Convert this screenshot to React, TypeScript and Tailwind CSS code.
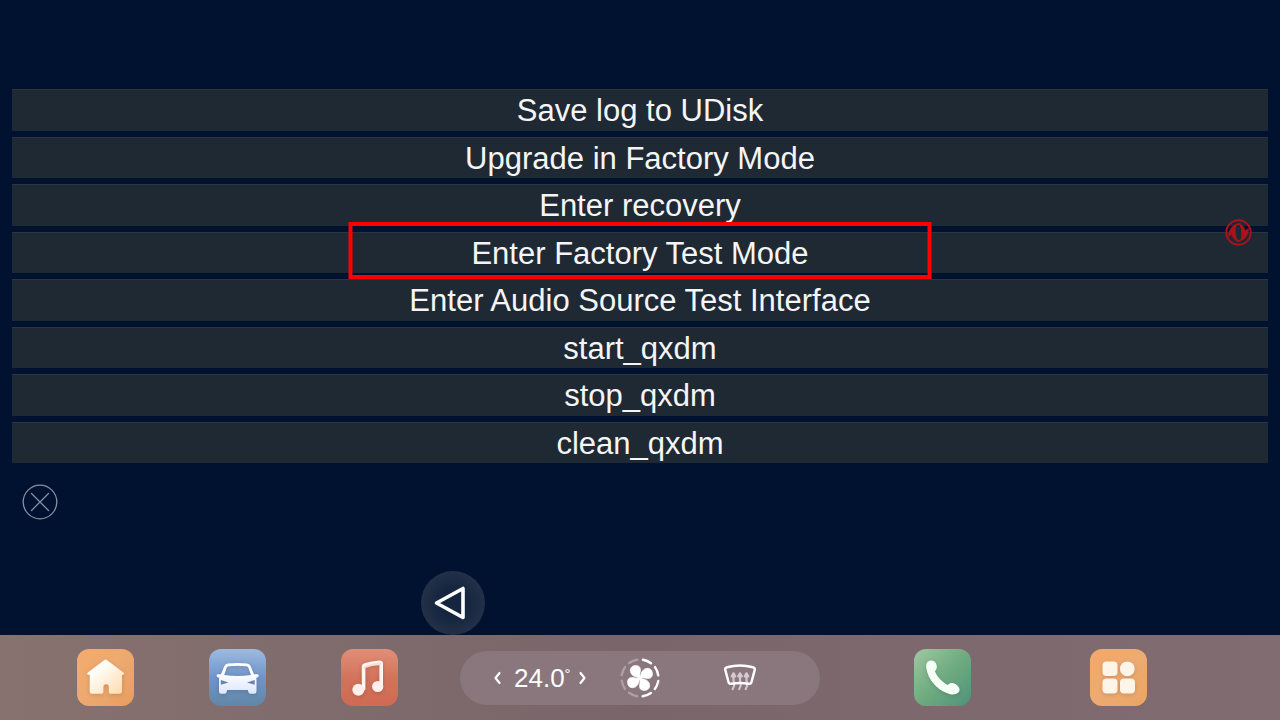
import React from 'react';

const menuItems = [
    { label: 'Save log to UDisk' },
    { label: 'Upgrade in Factory Mode' },
    { label: 'Enter recovery' },
    { label: 'Enter Factory Test Mode', marked: true },
    { label: 'Enter Audio Source Test Interface' },
    { label: 'start_qxdm' },
    { label: 'stop_qxdm' },
    { label: 'clean_qxdm' },
];

interface DockButtonProps {
    label: string;
    className: string;
    children: React.ReactNode;
}

const DockButton: React.FC<DockButtonProps> = ({ label, className, children }) => (
    <button aria-label={label} className={`size-[57px] shrink-0 rounded-xl ${className}`}>
        <svg viewBox="0 0 57 57" className="size-full drop-shadow-sm">
            {children}
        </svg>
    </button>
);

const HomeIcon = () => (
    <>
        <defs>
            <linearGradient id="home" x1="0" y1="0" x2="1" y2="1">
                <stop offset="0.3" stopColor="#fffdf8" />
                <stop offset="1" stopColor="#ffd9a8" />
            </linearGradient>
        </defs>
        <path
            d="M27 11.2q1.7-1.2 3.2 0L46.5 23.5q1.7 1.8-.5 2.2H45V42.5q0 2.3-2.3 2.3H33.5q-1.7 0-1.7-1.7V38a2.7 2.7 0 0 0-5.4 0v5.1q0 1.7-1.7 1.7H15q-2.3 0-2.3-2.3V25.7H11.3q-2.2-.4-.5-2.2z"
            fill="url(#home)"
        />
    </>
);

const CarIcon = () => (
    <>
        <defs>
            <linearGradient id="car" x1="0" y1="0" x2="0" y2="1">
                <stop offset="0.3" stopColor="#ffffff" />
                <stop offset="1" stopColor="#dce6ff" />
            </linearGradient>
        </defs>
        <path
            fillRule="evenodd"
            fill="url(#car)"
            d="M19 14.5Q28.5 13.3 38 14.5Q40.5 14.8 41.6 17L45 25.3H48.5Q50 25.5 49.7 27Q49.5 28.8 47.3 28.8Q47.5 30 47.5 32V42.5Q47.5 44.8 45 44.8H41.5Q39.5 44.8 39.3 42.8L38.8 41H18.2L17.7 42.8Q17.5 44.8 15.5 44.8H12Q10 44.8 10 42.5V32Q10 30 10.2 28.8Q8 28.8 7.6 27Q7.3 25.5 9 25.3H12L15.4 17Q16.5 14.8 19 14.5ZM19.5 17.3Q18.2 17.5 17.7 18.5L15.2 26Q28.5 28 42 26L39.3 18.5Q38.7 17.5 37.5 17.3Q28.5 16.4 19.5 17.3ZM11.8 31L19.5 33.5L11.8 35.8ZM45.7 31L38 33.5L45.7 35.8Z"
        />
    </>
);

const MusicIcon = () => (
    <>
        <path
            d="M22.6 40V17.6Q22.6 16.5 24 16Q31 13.6 38.5 13.2Q40.2 13.1 40.2 14.5V37"
            fill="none"
            stroke="#fff5f3"
            strokeWidth="3.6"
            strokeLinecap="round"
            strokeLinejoin="round"
        />
        <path d="M22.5 17.5Q31 14 40 13.5V16Q31 16.2 22.5 19.5Z" fill="#fbdcd6" />
        <circle cx="17.3" cy="40.7" r="6" fill="#fff0ed" />
        <circle cx="36.7" cy="37.5" r="5.6" fill="#fff0ed" />
    </>
);

const PhoneIcon = () => (
    <path
        d="M12.2 18.5Q11.6 12.5 16.5 11.6Q21 11.3 22.6 16Q23.5 20 20.9 22.5Q24.2 30.5 33.5 36Q36.5 32.5 41.5 35Q46.5 38.5 45.3 42Q43.5 46 37 45.4Q28 43.5 21 36.3Q13.5 28.5 12.2 18.5Z"
        fill="#f6fff6"
    />
);

const AppsIcon = () => (
    <g fill="#fff4e8">
        <rect x="12.5" y="12.5" width="15" height="14.5" rx="4" />
        <circle cx="37.3" cy="19.8" r="7.4" />
        <rect x="12.5" y="29.5" width="15" height="15" rx="4" />
        <rect x="30" y="29.5" width="15" height="15" rx="4" />
    </g>
);

const FanIcon = () => (
    <svg viewBox="0 0 40 40" className="size-10">
        {[0, 1, 2, 3, 4, 5, 6, 7].map((i) => (
            <path
                key={i}
                d="M22.9 1.7A18.5 18.5 0 0 1 31 5.2"
                transform={`rotate(${i * 45} 20 20)`}
                fill="none"
                stroke="#ffffff"
                strokeOpacity={i < 4 ? 1 : 0.3}
                strokeWidth="2.4"
                strokeLinecap="round"
            />
        ))}
        {[0, 90, 180, 270].map((angle) => (
            <path
                key={angle}
                d="M19.3 19.6C15 19.4 10.3 17 10.3 12.5C10.3 9 13 7.5 15.8 7.5C19.8 7.5 21 10.5 20.4 13.5C19.8 16 19.6 17 20.4 19Z"
                transform={`rotate(${angle} 20 20)`}
                fill="#ffffff"
                stroke="#ffffff"
                strokeWidth="0.6"
            />
        ))}
        <circle cx="20" cy="20" r="1.5" fill="#ffffff" />
    </svg>
);

const DefrostIcon = () => (
    <svg viewBox="0 0 34 28" className="h-7 w-[34px]" fill="none" strokeLinecap="round" strokeLinejoin="round">
        <g stroke="#d3cacf" strokeWidth="2.2">
            {[10.5, 17, 23.5].map((x) => (
                <g key={x} transform={`translate(${x} 0)`}>
                    <path d="M0 10V15.5Q0 18 .7 19.5Q1.2 22-.8 25" />
                    <path d="M-1.8 12.3L0 9.3L1.8 12.3Z" fill="#d3cacf" />
                </g>
            ))}
        </g>
        <path
            d="M4 3.2Q17-.4 30 3.2Q32.3 3.9 31.7 6L28.5 18Q28 20.1 25.5 19.8Q17 18.2 8.5 19.8Q6 20.1 5.5 18L2.3 6Q1.7 3.9 4 3.2Z"
            stroke="#ffffff"
            strokeWidth="2.5"
        />
    </svg>
);

const BrandLogo = () => (
    <svg viewBox="0 0 27 27" className="size-[27px]" fill="#b0101c">
        <circle cx="13.5" cy="13.5" r="12.2" fill="none" stroke="#b0101c" strokeWidth="1.9" />
        <path d="M16.5 4C10.5 6 9 15 13.5 22.5C9.5 21.5 7.3 19 6.8 15.5L3.2 18C3 10.5 8.5 3.5 16.5 4Z" />
        <path d="M10.5 23C16.5 21 18 12 13.500 4.500C17.500 5.500 19.700 8 20.200 11.500L23.800 9C24 16.500 18.500 23.500 10.500 23Z" />
        <ellipse cx="13.5" cy="13.5" rx="2.8" ry="7.6" transform="rotate(-8 13.5 13.5)" fill="#1f2a34" />
    </svg>
);

export default function App() {
    return (
        <div className="flex min-h-screen flex-col bg-[#00122f] font-['Liberation_Sans',sans-serif] text-white">
            <main className="relative flex-1 px-3 pt-[89px]">
                <ul className="grid min-h-[374px] auto-rows-fr gap-1.5">
                    {menuItems.map((item) => (
                        <li key={item.label} className="relative">
                            <button className="size-full border-t border-[#2b353e] bg-[#1f2934] pt-0.5 text-[31px] leading-9 text-[#f5f5f5]">
                                {item.label}
                            </button>
                            {item.marked && (
                                <span className="pointer-events-none absolute -top-2.5 -bottom-1.5 left-1/2 z-10 w-[583px] -translate-x-1/2 border-4 border-[#ff0000]" />
                            )}
                        </li>
                    ))}
                </ul>

                <button aria-label="Close" className="mt-[21px] ml-2.5 block size-9">
                    <svg viewBox="0 0 36 36" className="size-full" fill="none" stroke="#8490a0" strokeWidth="1.3" strokeLinecap="round">
                        <circle cx="18" cy="18" r="16.8" />
                        <path d="M9.5 9.5L26.5 26.5M26.5 9.5L9.5 26.5" />
                    </svg>
                </button>

                {/* floating controls */}
                <div className="absolute top-[219px] right-7">
                    <BrandLogo />
                </div>
                <button
                    aria-label="Back"
                    className="absolute bottom-0 left-[421px] size-16 rounded-full bg-radial from-[#16253f] from-30% to-[#2b384e]"
                >
                    <svg viewBox="0 0 64 64" className="size-full" fill="none" stroke="#ffffff" strokeWidth="3.6" strokeLinejoin="round">
                        <path d="M42 17.5V46.5L15.5 32Z" />
                    </svg>
                </button>
            </main>

            <footer className="grid grid-cols-[1fr_auto_1fr] items-center bg-linear-to-r from-[#87726f] via-[#79656a] to-[#806c71] py-3.5">
                <nav className="flex justify-between pr-[62px] pl-[77px]">
                    <DockButton label="Home" className="bg-linear-to-br from-[#f5ab6c] via-[#eda970] to-[#e89d5f]">
                        <HomeIcon />
                    </DockButton>
                    <DockButton label="Vehicle" className="bg-linear-to-b from-[#9dbbe0] via-[#7194ca] to-[#6187a6]">
                        <CarIcon />
                    </DockButton>
                    <DockButton label="Music" className="bg-linear-to-b from-[#e18f78] via-[#d3735c] to-[#cf6a53]">
                        <MusicIcon />
                    </DockButton>
                </nav>

                <section className="flex h-[54px] w-[360px] items-center rounded-full bg-[#8a777d] pl-7">
                    <button aria-label="Lower temperature" className="w-5">
                        <svg viewBox="0 0 20 20" className="size-5" fill="none" stroke="#ffffff" strokeWidth="2.2" strokeLinecap="round" strokeLinejoin="round">
                            <path d="M11.5 5L7.5 10L11.5 15" />
                        </svg>
                    </button>
                    <span className="ml-1.5 flex w-[58px] items-start text-[26px] leading-7">
                        24.0<span className="text-[15px] leading-5">°</span>
                    </span>
                    <button aria-label="Raise temperature" className="w-5">
                        <svg viewBox="0 0 20 20" className="size-5" fill="none" stroke="#ffffff" strokeWidth="2.2" strokeLinecap="round" strokeLinejoin="round">
                            <path d="M8.5 5L12.5 10L8.5 15" />
                        </svg>
                    </button>
                    <button aria-label="Fan" className="ml-7">
                        <FanIcon />
                    </button>
                    <button aria-label="Defrost" className="ml-[63px]">
                        <DefrostIcon />
                    </button>
                </section>

                <nav className="flex justify-between pr-[133px] pl-[94px]">
                    <DockButton label="Phone" className="bg-linear-to-br from-[#a0c8a2] via-[#6fac80] to-[#4f917a]">
                        <PhoneIcon />
                    </DockButton>
                    <DockButton label="Apps" className="bg-linear-to-br from-[#f3a967] via-[#edaa72] to-[#eba663]">
                        <AppsIcon />
                    </DockButton>
                </nav>
            </footer>
        </div>
    );
}
